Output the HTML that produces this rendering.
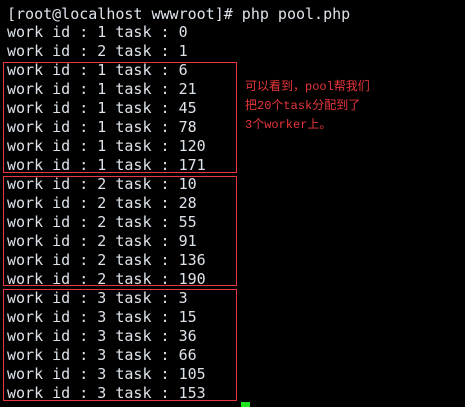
<!DOCTYPE html>
<html><head><meta charset="utf-8"><style>
html,body{margin:0;padding:0;background:#000;width:465px;height:407px;overflow:hidden;position:relative}
pre{position:absolute;left:7px;top:4.5px;margin:0;font-family:"DejaVu Sans Mono","Liberation Mono",monospace;font-size:15px;line-height:18.95px;color:#dde3ea}
.box{position:absolute;border:1.5px solid #e8363a;box-sizing:border-box}
.note{position:absolute;left:245px;top:78px;font-family:"Liberation Mono","Noto Sans CJK SC",monospace;font-size:12px;line-height:19px;color:#e8363a}
.cur{position:absolute;left:241px;top:402px;width:9px;height:6px;background:#1ee61e}
</style></head><body>
<pre>[root@localhost wwwroot]# php pool.php
work id : 1 task : 0
work id : 2 task : 1
work id : 1 task : 6
work id : 1 task : 21
work id : 1 task : 45
work id : 1 task : 78
work id : 1 task : 120
work id : 1 task : 171
work id : 2 task : 10
work id : 2 task : 28
work id : 2 task : 55
work id : 2 task : 91
work id : 2 task : 136
work id : 2 task : 190
work id : 3 task : 3
work id : 3 task : 15
work id : 3 task : 36
work id : 3 task : 66
work id : 3 task : 105
work id : 3 task : 153</pre>
<div class="box" style="left:3px;top:62px;width:234px;height:111px"></div>
<div class="box" style="left:3px;top:176px;width:234px;height:110px"></div>
<div class="box" style="left:3px;top:289px;width:234px;height:112px"></div>
<div class="note">可以看到，pool帮我们<br>把20个task分配到了<br>3个worker上。</div>
<div class="cur"></div>
</body></html>
